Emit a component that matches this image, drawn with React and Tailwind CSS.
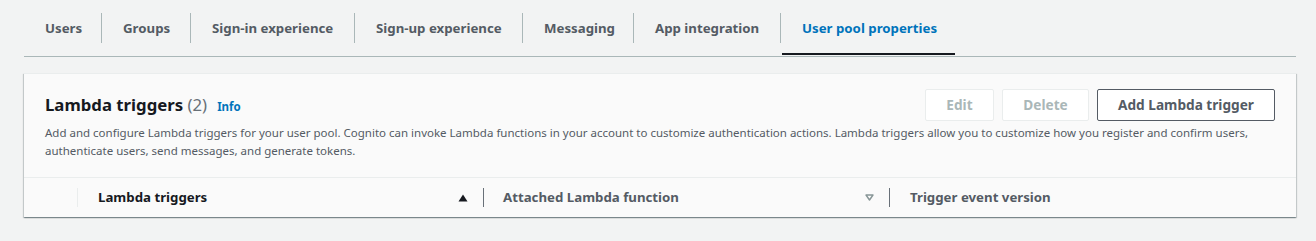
import React from "react";

const tabs = [
  { label: "Users", w: "w-[35px]" },
  { label: "Groups", w: "w-[46px]" },
  { label: "Sign-in experience", w: "w-[121px]" },
  { label: "Sign-up experience", w: "w-[125px]" },
  { label: "Messaging", w: "w-[68px]" },
  { label: "App integration", w: "w-[104px]" },
  { label: "User pool properties", w: "w-[135px]", active: true },
];

function SortUp() {
  return (
    <svg width="10" height="8" viewBox="0 0 10 8" className="block">
      <path d="M5 0.5 L9.5 7.5 L0.5 7.5 Z" fill="#16191f" />
    </svg>
  );
}

function SortNone() {
  return (
    <svg width="9" height="7" viewBox="0 0 9 7" className="block">
      <path d="M1 1 L8 1 L4.5 6 Z" fill="none" stroke="#879596" strokeWidth="1.4" strokeLinejoin="round" />
    </svg>
  );
}

export default function App() {
  return (
    <div className="min-h-screen bg-[#f2f3f3] pl-[24px] pr-[20px] font-['Noto_Sans',sans-serif]">
      {/* Tabs */}
      <div className="flex h-[57px] items-center border-b border-[#aab7b8]">
        {tabs.map((t, i) => (
          <React.Fragment key={t.label}>
            {i > 0 && <div className="h-[30px] w-px bg-[#aab7b8]" />}
            <div className="relative flex h-full items-center px-[21px] pt-[2px]">
              <span
                className={`${t.w} whitespace-nowrap text-[13.25px] font-bold ${
                  t.active ? "text-[#0073bb]" : "text-[#545b64]"
                }`}
              >
                {t.label}
              </span>
              {t.active && (
                <div className="absolute bottom-px left-px right-[3px] h-[2px] bg-[#16191f]" />
              )}
            </div>
          </React.Fragment>
        ))}
      </div>

      {/* Card */}
      <div className="mt-[16px] border-t border-[#eaeded] bg-[#fafafa] shadow-[0_1px_1px_0_rgba(0,28,36,0.3),1px_1px_1px_0_rgba(0,28,36,0.15),-1px_1px_1px_0_rgba(0,28,36,0.15)]">
        <div className="border-b border-[#eaeded] px-[21px] pb-[17px] pt-[15px]">
          <div className="flex h-[32px] items-center justify-between">
            <div className="flex items-baseline">
              <h2 className="text-[16.75px] font-bold leading-none text-[#16191f]">
                Lambda triggers{" "}
                <span className="font-normal text-[#687078]">(2)</span>
              </h2>
              <span className="ml-[10px] text-[11.5px] font-bold leading-none text-[#0073bb]">Info</span>
            </div>
            <div className="flex gap-[8px]">
              <button className="h-[32px] w-[69px] rounded-[2px] border border-[#eaeded] bg-white text-[13.65px] font-bold text-[#aab7b8]">
                Edit
              </button>
              <button className="h-[32px] w-[87px] rounded-[2px] border border-[#eaeded] bg-white text-[13.65px] font-bold text-[#aab7b8]">
                Delete
              </button>
              <button className="h-[32px] w-[178px] rounded-[2px] border border-[#545b64] bg-white text-[13.65px] font-bold text-[#545b64]">
                Add Lambda trigger
              </button>
            </div>
          </div>
          <p className="mt-[3px] text-[11.5px] leading-[18px] text-[#545b64]">
            Add and configure Lambda triggers for your user pool. Cognito can invoke Lambda functions in your account to customize authentication actions. Lambda triggers allow you to customize how you register and confirm users, authenticate users, send messages, and generate tokens.
          </p>
        </div>

        {/* Table header */}
        <div className="flex h-[39px] items-center text-[13.25px] font-bold">
          <div className="w-[53px]" />
          <div className="h-[19px] w-px bg-[#eaeded]" />
          <div className="flex w-[405px] items-center justify-between pl-[20px] pr-[15px]">
            <span className="text-[#16191f]">Lambda triggers</span>
            <SortUp />
          </div>
          <div className="h-[19px] w-px bg-[#687078]" />
          <div className="flex w-[405px] items-center justify-between pl-[19px] pr-[15px]">
            <span className="text-[#545b64]">Attached Lambda function</span>
            <SortNone />
          </div>
          <div className="h-[19px] w-px bg-[#687078]" />
          <div className="pl-[20px]">
            <span className="text-[#545b64]">Trigger event version</span>
          </div>
        </div>
      </div>
    </div>
  );
}
